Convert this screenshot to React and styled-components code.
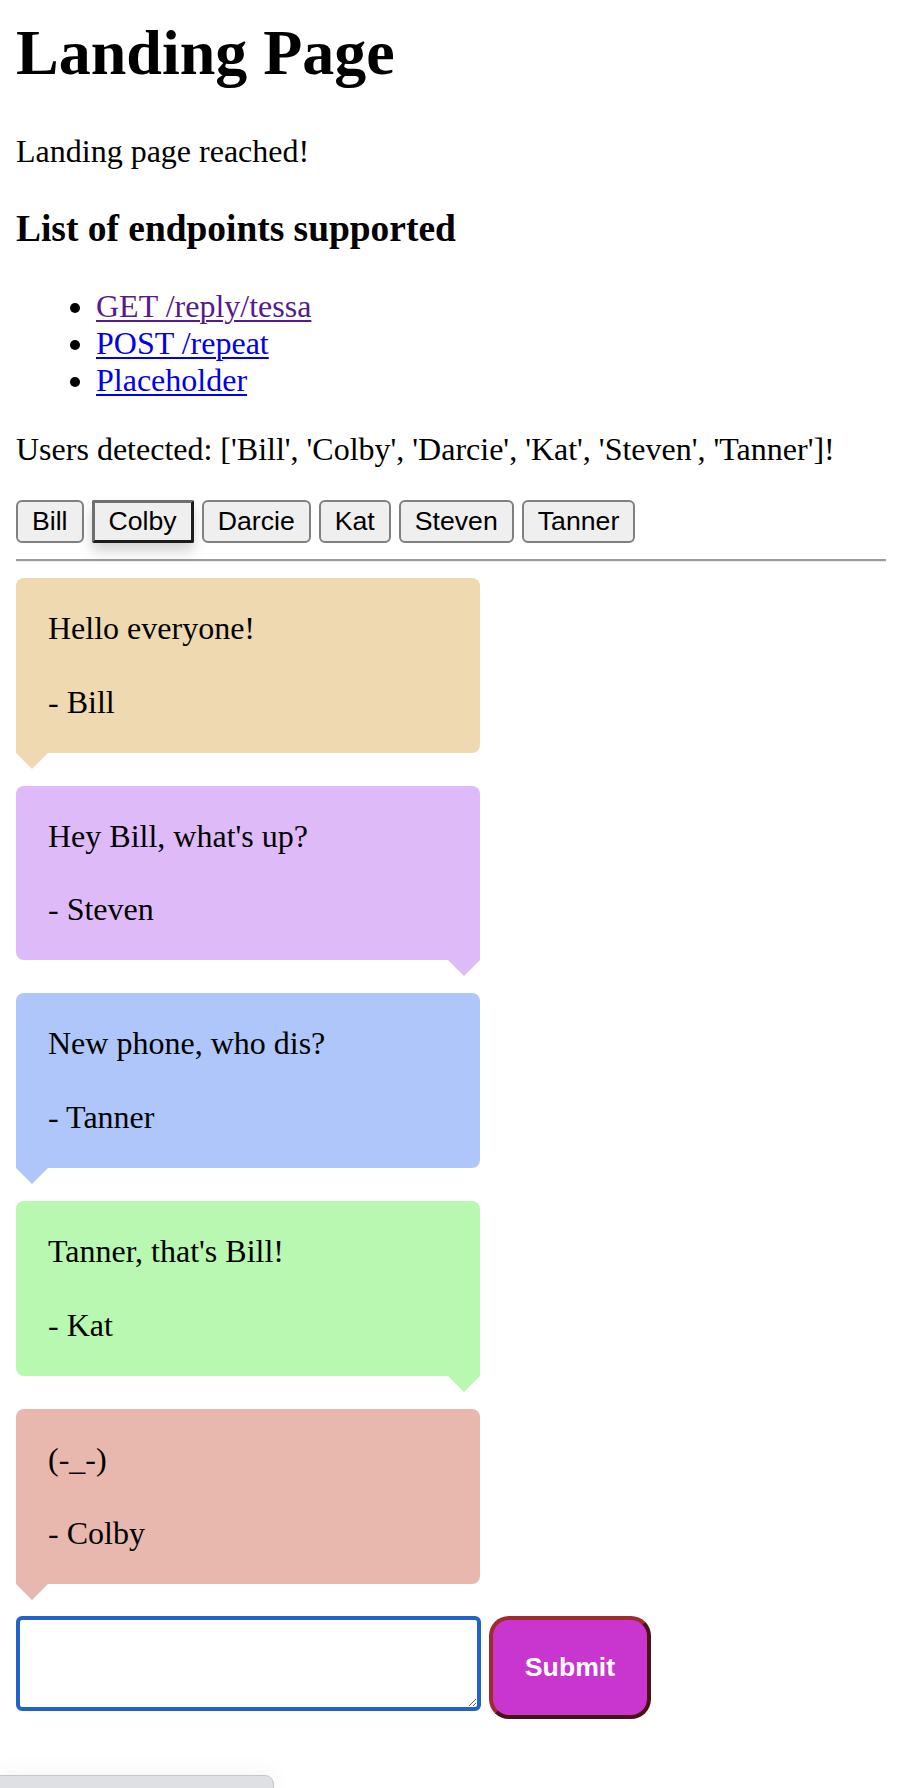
import React from 'react';
import styled, { createGlobalStyle, css } from 'styled-components';

const GlobalStyle = createGlobalStyle`
  body {
    margin: 16px;
    font-family: 'Liberation Serif', 'Times New Roman', serif;
    font-size: 32px;
    color: #000;
    background: #fff;
  }
`;

const Title = styled.h1`
  font-size: 64px;
  font-weight: bold;
  margin: 0 0 42.88px 0;
`;

const Text = styled.p`
  margin: 32px 0;
`;

const SubTitle = styled.h3`
  font-size: 37.44px;
  font-weight: bold;
  margin: 37.44px 0;
`;

const EndpointList = styled.ul`
  margin: 32px 0;
  padding-left: 80px;
  list-style: disc;
`;

const EndpointLink = styled.a`
  color: ${(p) => (p.$visited ? '#551a8b' : '#0000ee')};
  text-decoration: underline;
  text-decoration-thickness: 2px;
  text-underline-offset: 3px;
`;

const UserRow = styled.div`
  display: flex;
  gap: 8px;
  margin: 32px 0 16px 0;
`;

const UserButton = styled.button`
  font-family: 'Liberation Sans', Arial, sans-serif;
  font-size: 26.67px;
  color: #000;
  background: #efefef;
  height: 43px;
  padding: 0 14px;
  border: 2px solid #808080;
  border-radius: 6px;
  cursor: pointer;
  ${(p) =>
    p.$active &&
    css`
      border: 3px solid;
      border-color: #6f6f6f #1c1c1c #1c1c1c #6f6f6f;
      border-radius: 2px;
      box-shadow: 0 8px 14px rgba(0, 0, 0, 0.18);
    `}
`;

const Rule = styled.hr`
  margin: 16px -16px 16px 0;
  border: none;
  border-top: 2px solid #9a9a9a;
  border-bottom: 1px solid #eeeeee;
  height: 0;
`;

const Chat = styled.div`
  display: flex;
  flex-direction: column;
  gap: 33px;
`;

const Bubble = styled.div`
  position: relative;
  width: 400px;
  padding: 32px;
  background: ${(p) => p.$color};
  border-radius: 8px;
  ${(p) =>
    p.$side === 'left'
      ? css`
          border-bottom-left-radius: 0;
        `
      : css`
          border-bottom-right-radius: 0;
        `}

  &::after {
    content: '';
    position: absolute;
    bottom: -16px;
    ${(p) => (p.$side === 'left' ? 'left: 0;' : 'right: 0;')}
    border-left: 16px solid transparent;
    border-right: 16px solid transparent;
    border-top: 16px solid ${(p) => p.$color};
  }
`;

const MessageText = styled.div``;

const Signature = styled.div`
  margin-top: 36.77px;
`;

const Composer = styled.form`
  display: flex;
  align-items: flex-start;
  gap: 8px;
  margin-top: 32px;
`;

const MessageInput = styled.textarea`
  box-sizing: border-box;
  width: 465px;
  height: 95px;
  border: 4px solid #2263c9;
  border-radius: 6px;
  outline: none;
  font-family: 'Liberation Mono', monospace;
  font-size: 26px;
  padding: 4px;
`;

const SubmitButton = styled.button`
  box-sizing: border-box;
  width: 162px;
  height: 103px;
  background: #c935cf;
  color: #fff;
  font-family: 'Liberation Sans', Arial, sans-serif;
  font-size: 26.67px;
  font-weight: bold;
  border: 4px solid;
  border-color: #9b2d2d #4a1212 #4a1212 #9b2d2d;
  border-radius: 20px;
  cursor: pointer;
`;

const StatusBar = styled.div`
  position: fixed;
  left: -1px;
  bottom: -1px;
  width: 273px;
  height: 12px;
  background: #dfe0e3;
  border: 1px solid #c6c7ca;
  border-top-right-radius: 9px;
  box-shadow: 0 0 24px rgba(0, 0, 0, 0.07);
`;

const users = ['Bill', 'Colby', 'Darcie', 'Kat', 'Steven', 'Tanner'];

const messages = [
  { text: 'Hello everyone!', author: 'Bill', color: '#efd9b1', side: 'left' },
  { text: "Hey Bill, what's up?", author: 'Steven', color: '#debbf8', side: 'right' },
  { text: 'New phone, who dis?', author: 'Tanner', color: '#aec6fa', side: 'left' },
  { text: "Tanner, that's Bill!", author: 'Kat', color: '#b8f8b0', side: 'right' },
  { text: '(-_-)', author: 'Colby', color: '#e8b8ae', side: 'left' },
];

const App = () => {
  return (
    <>
      <GlobalStyle />
      <Title>Landing Page</Title>
      <Text>Landing page reached!</Text>
      <SubTitle>List of endpoints supported</SubTitle>
      <EndpointList>
        <li>
          <EndpointLink href='#reply' $visited>
            GET /reply/tessa
          </EndpointLink>
        </li>
        <li>
          <EndpointLink href='#repeat'>POST /repeat</EndpointLink>
        </li>
        <li>
          <EndpointLink href='#placeholder'>Placeholder</EndpointLink>
        </li>
      </EndpointList>
      <Text>
        Users detected: ['Bill', 'Colby', 'Darcie', 'Kat', 'Steven', 'Tanner']!
      </Text>
      <UserRow>
        {users.map((name) => (
          <UserButton key={name} $active={name === 'Colby'}>
            {name}
          </UserButton>
        ))}
      </UserRow>
      <Rule />
      <Chat>
        {messages.map((m) => (
          <Bubble key={m.author} $color={m.color} $side={m.side}>
            <MessageText>{m.text}</MessageText>
            <Signature>- {m.author}</Signature>
          </Bubble>
        ))}
      </Chat>
      <Composer onSubmit={(e) => e.preventDefault()}>
        <MessageInput />
        <SubmitButton type='submit'>Submit</SubmitButton>
      </Composer>
      <StatusBar />
    </>
  );
};

export default App;
